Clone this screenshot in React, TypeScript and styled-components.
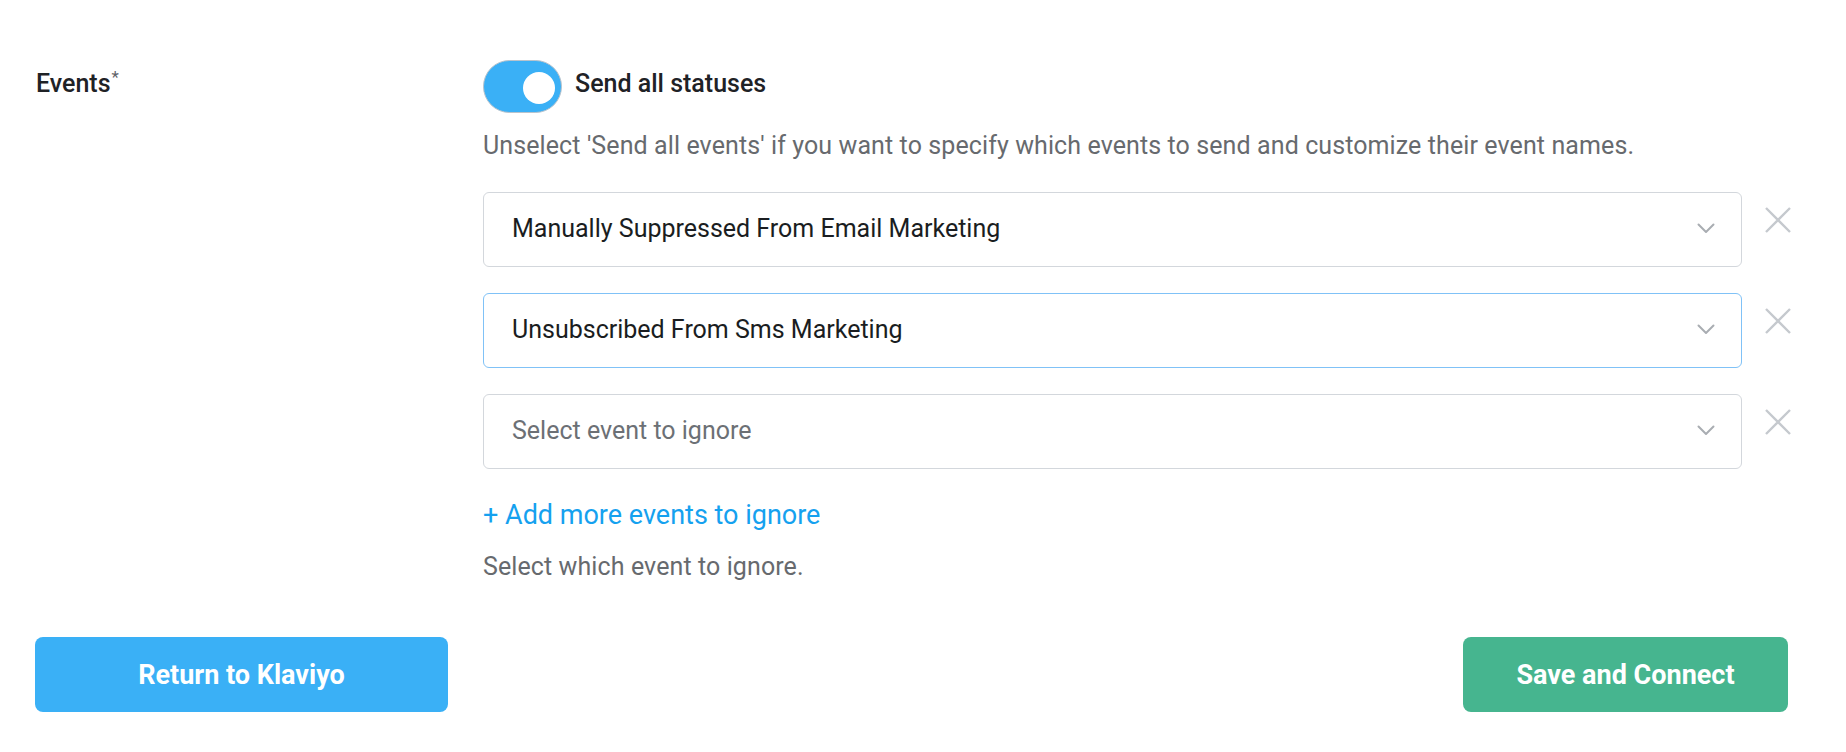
import styled, { createGlobalStyle } from "styled-components";

const GlobalStyle = createGlobalStyle`
  html, body {
    margin: 0;
    padding: 0;
    background: #fff;
  }
  body {
    font-family: Roboto, "Liberation Sans", Arial, sans-serif;
    color: #1f2226;
  }
`;

const Page = styled.div`
  width: 1846px;
  height: 752px;
  box-sizing: border-box;
  padding: 60px 55px 0 35px;
  display: flex;
  flex-direction: column;
`;

const FormRow = styled.div`
  display: flex;
  align-items: flex-start;
`;

const LabelCol = styled.div`
  width: 448px;
  flex-shrink: 0;
`;

const Label = styled.div`
  font-size: 25px;
  font-weight: 500;
  line-height: 47px;
  color: #1f2226;
  padding-left: 1px;
`;

const Asterisk = styled.sup`
  font-size: 17px;
  font-weight: 400;
  color: #5f6368;
  margin-left: 1px;
  vertical-align: 9px;
  line-height: 0;
`;

const FieldCol = styled.div`
  flex: 1;
  display: flex;
  flex-direction: column;
  align-items: flex-start;
`;

const ToggleRow = styled.div`
  display: flex;
  align-items: flex-start;
  height: 53px;
`;

const Switch = styled.div<{ $on: boolean }>`
  position: relative;
  width: 79px;
  height: 53px;
  box-sizing: border-box;
  border-radius: 27px;
  border: 1px solid ${(p) => (p.$on ? "#b9c3cc" : "#ced4da")};
  background: ${(p) => (p.$on ? "#3ab0f6" : "#fff")};
  flex-shrink: 0;
`;

const Knob = styled.span<{ $on: boolean }>`
  position: absolute;
  top: 11px;
  left: ${(p) => (p.$on ? "39px" : "8px")};
  width: 32px;
  height: 32px;
  border-radius: 50%;
  background: #fff;
`;

const ToggleText = styled.span`
  font-size: 25px;
  font-weight: 500;
  line-height: 47px;
  margin-left: 13px;
  color: #1f2226;
`;

const Help = styled.p<{ $top: number }>`
  margin: ${(p) => p.$top}px 0 0;
  font-size: 25px;
  line-height: 32px;
  letter-spacing: 0.1px;
  color: #676a6e;
`;

const SelectList = styled.div`
  display: flex;
  flex-direction: column;
  gap: 26px;
  margin-top: 30px;
  width: 100%;
`;

const SelectRow = styled.div`
  display: flex;
  align-items: flex-start;
  width: 100%;
`;

const SelectBox = styled.div<{ $focused?: boolean }>`
  flex: 1;
  height: 75px;
  box-sizing: border-box;
  border: 1px solid ${(p) => (p.$focused ? "#80c2f7" : "#d3d7dc")};
  border-radius: 6px;
  display: flex;
  align-items: center;
  justify-content: space-between;
  padding: 0 26px 2px 28px;
  background: #fff;
`;

const SelectValue = styled.span<{ $placeholder?: boolean }>`
  font-size: 25px;
  color: ${(p) => (p.$placeholder ? "#6c7075" : "#1a1d21")};
`;

const Remove = styled.button`
  width: 26px;
  height: 26px;
  margin: 15px 0 0 23px;
  padding: 0;
  border: none;
  background: none;
  display: flex;
  flex-shrink: 0;
`;

const AddLink = styled.a`
  margin-top: 30px;
  font-size: 27px;
  line-height: 32px;
  color: #15a1ef;
  text-decoration: none;
`;

const Footer = styled.div`
  display: flex;
  justify-content: space-between;
  margin: 54px 3px 0 0;
`;

const Button = styled.button<{ $variant: "blue" | "green"; $width: number }>`
  width: ${(p) => p.$width}px;
  height: 75px;
  border: none;
  border-radius: 8px;
  background: ${(p) => (p.$variant === "blue" ? "#3ab0f6" : "#46b58f")};
  color: #fff;
  font-family: Roboto, "Liberation Sans", Arial, sans-serif;
  font-size: 27px;
  font-weight: 700;
`;

const Chevron = () => (
  <svg width="18" height="11" viewBox="0 0 18 11">
    <polyline
      points="1.5,1.5 9,9 16.5,1.5"
      fill="none"
      stroke="#a9adb2"
      strokeWidth="2"
      strokeLinecap="round"
      strokeLinejoin="round"
    />
  </svg>
);

const Cross = () => (
  <svg width="26" height="26" viewBox="0 0 26 26">
    <path d="M1 1 L25 25 M25 1 L1 25" stroke="#c5c9ce" strokeWidth="2.4" />
  </svg>
);

const events = [
  { id: 1, value: "Manually Suppressed From Email Marketing", focused: false },
  { id: 2, value: "Unsubscribed From Sms Marketing", focused: true },
  { id: 3, value: "", focused: false },
];

export default function App() {
  return (
    <>
      <GlobalStyle />
      <Page>
        <FormRow>
          <LabelCol>
            <Label>
              Events<Asterisk>*</Asterisk>
            </Label>
          </LabelCol>
          <FieldCol>
            <ToggleRow>
              <Switch $on>
                <Knob $on />
              </Switch>
              <ToggleText>Send all statuses</ToggleText>
            </ToggleRow>
            <Help $top={17}>
              Unselect 'Send all events' if you want to specify which events to send and customize their event names.
            </Help>
            <SelectList>
              {events.map((ev) => (
                <SelectRow key={ev.id}>
                  <SelectBox $focused={ev.focused}>
                    <SelectValue $placeholder={!ev.value}>
                      {ev.value || "Select event to ignore"}
                    </SelectValue>
                    <Chevron />
                  </SelectBox>
                  <Remove aria-label="Remove">
                    <Cross />
                  </Remove>
                </SelectRow>
              ))}
            </SelectList>
            <AddLink href="#">+ Add more events to ignore</AddLink>
            <Help $top={20}>Select which event to ignore.</Help>
          </FieldCol>
        </FormRow>
        <Footer>
          <Button $variant="blue" $width={413}>
            Return to Klaviyo
          </Button>
          <Button $variant="green" $width={325}>
            Save and Connect
          </Button>
        </Footer>
      </Page>
    </>
  );
}
